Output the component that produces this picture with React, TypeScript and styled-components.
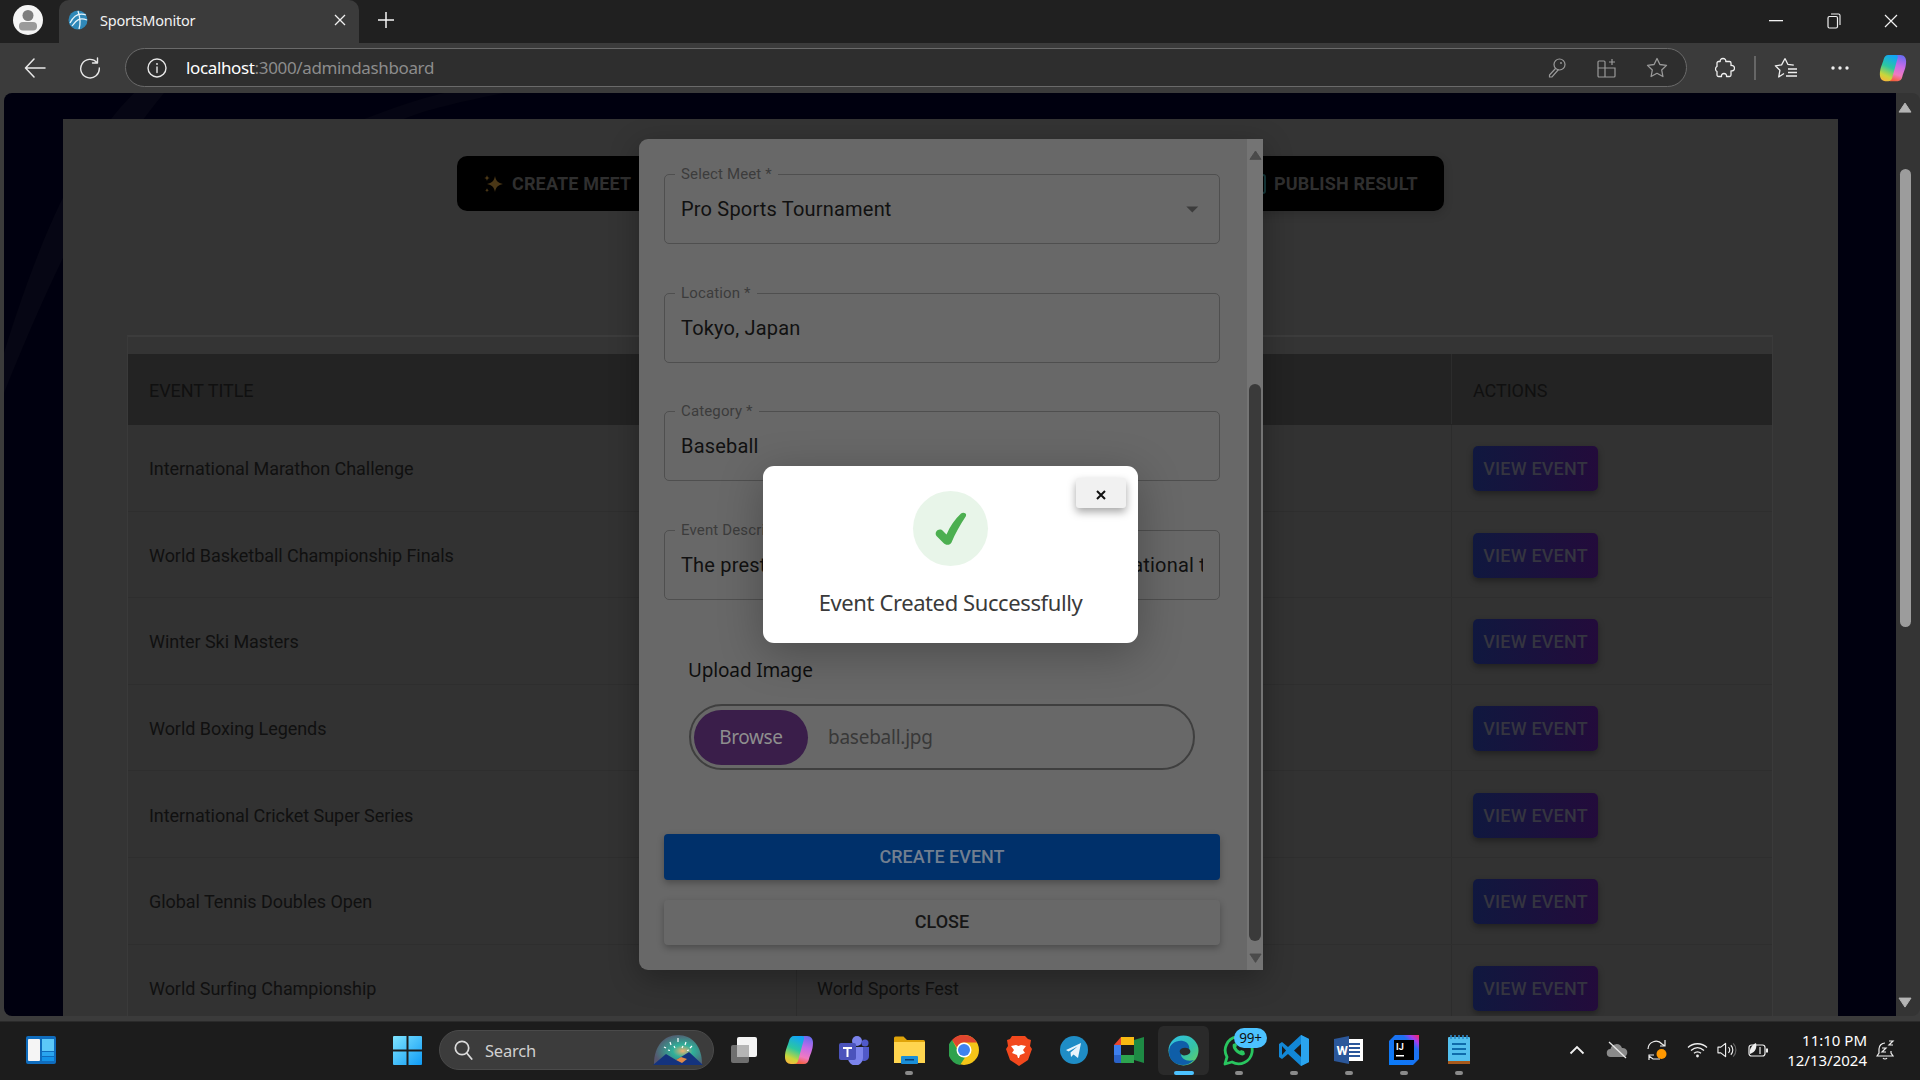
import React from "react";
import styled, { createGlobalStyle } from "styled-components";

const Global = createGlobalStyle`
  html, body { margin: 0; padding: 0; width: 1920px; height: 1080px; overflow: hidden; background: #1c1c1c; }
  * { box-sizing: border-box; }
`;
const UI = `"Noto Sans", "Open Sans", sans-serif`;
const RB = `Roboto, "Liberation Sans", sans-serif`;

const Shell = styled.div`
  width: 1920px; height: 1080px; display: flex; flex-direction: column; background: #3b3b3b; overflow: hidden;
`;
const TabBar = styled.div`
  height: 43px; flex: none; background: #202020; display: flex; align-items: flex-start; position: relative;
`;
const Avatar = styled.div`
  width: 30px; height: 30px; margin: 5px 16px 0 13px; border-radius: 50%; background: #f5f5f5; display: flex; align-items: center; justify-content: center;
`;
const Tab = styled.div`
  width: 300px; height: 43px; background: #3b3b3b; border-radius: 10px 10px 0 0; display: flex; align-items: center; padding: 0 13px 3px 9px; color: #f2f2f2;
`;
const TabTitle = styled.span`
  font: 400 14.5px ${UI}; letter-spacing: -0.25px; margin-left: 12px; flex: 1; white-space: nowrap;
`;
const NewTab = styled.div`
  width: 54px; height: 40px; display: flex; align-items: center; justify-content: center;
`;
const WinControls = styled.div`
  margin-left: auto; display: flex; height: 42px; align-items: center;
`;
const WinBtn = styled.div`
  width: 57.5px; height: 42px; display: flex; align-items: center; justify-content: center;
`;
const Toolbar = styled.div`
  height: 50px; flex: none; background: #3b3b3b; display: flex; align-items: center; padding: 0 0 1px 0;
`;
const NavBtn = styled.div<{ $w: number; $ml?: number }>`
  width: ${(p) => p.$w}px; margin-left: ${(p) => p.$ml ?? 0}px; height: 40px; flex: none; display: flex; align-items: center; justify-content: center;
`;
const Address = styled.div`
  width: 1562px; height: 39px; flex: none; margin-left: 11px; border: 1.5px solid #6a6a6a; border-radius: 20px; background: #2e2e2e; display: flex; align-items: center; padding: 0 4px 0 21px;
`;
const UrlHost = styled.span`
  font: 400 17px ${UI}; color: #fff; letter-spacing: -0.36px; margin-left: 19px;
`;
const UrlPath = styled.span`
  font: 400 17px ${UI}; color: #8c8c8c; letter-spacing: -0.36px; flex: 1;
`;
const AddrIcon = styled.div`
  width: 50px; height: 30px; display: flex; align-items: center; justify-content: center; flex: none;
`;
const Sep = styled.div`
  width: 1.5px; height: 24px; background: #666; flex: none;
`;
const Content = styled.div`
  flex: 1; min-height: 0; display: flex; margin: 0 0 5px 4px;
`;
const Page = styled.div`
  width: 1892px; position: relative; background: #00000f; border-radius: 8px 0 0 8px; padding: 26px 58px 0 59px; overflow: hidden;
`;
const Swoosh = styled.svg`
  position: absolute; inset: 0; width: 100%; height: 100%;
`;
const Panel = styled.div`
  position: relative; height: 100%; background: #343434; padding-top: 37px;
`;
const TopActions = styled.div`
  display: flex; justify-content: center;
`;
const ActionBtn = styled.div<{ $w: number; $pl: number }>`
  width: ${(p) => p.$w}px; padding-left: ${(p) => p.$pl}px; height: 55px; background: #000; display: flex; align-items: center; gap: 8px; font: 700 18px ${RB}; letter-spacing: .15px; color: #2f2f2f; text-transform: uppercase; white-space: nowrap;
  &:first-child { border-radius: 10px 0 0 10px; }
  &:last-child { border-radius: 0 10px 10px 0; box-shadow: 0 3px 10px rgba(0,0,0,.15); }
`;
const Table = styled.div`
  margin: 124px 65px 0 64px; border-top: 2px solid #3c3c3c; padding-top: 17px; border-left: 1px solid #3a3a3a; border-right: 1px solid #3a3a3a;
`;
const Row = styled.div<{ $head?: boolean }>`
  display: grid; grid-template-columns: 669px 655px 1fr; height: ${(p) => (p.$head ? 71 : 86.6)}px; align-items: center; background: ${(p) => (p.$head ? "#232323" : "#323232")}; border-bottom: 1px solid ${(p) => (p.$head ? "#232323" : "#2e2e2e")};
`;
const Cell = styled.div`
  height: 100%; display: flex; align-items: center; padding: 2px 0 0 20px; font: 400 18px ${RB}; letter-spacing: -.05px; color: #101010; border-right: 1px solid #2c2c2c;
  &:first-child { padding-left: 21px; }
  &:last-child { border-right: 0; padding-left: 21px; }
`;
const ViewBtn = styled.div`
  width: 125px; height: 45px; border-radius: 5px; background: linear-gradient(90deg, #10183f, #230b3b); display: flex; align-items: center; justify-content: center; font: 500 18px ${RB}; letter-spacing: .2px; color: #353540; box-shadow: 0 3px 6px rgba(0,0,0,.35);
`;
const Modal = styled.div`
  position: absolute; left: 635px; top: 46px; width: 624px; height: 831px; background: #686868; border-radius: 9px 0 0 9px; display: flex; box-shadow: 0 8px 30px rgba(0,0,0,.3);
`;
const ModalBody = styled.div`
  width: 608px; flex: none; padding: 26px 27px 0 25px; display: flex; flex-direction: column;
`;
const Field = styled.fieldset<{ $mb: number }>`
  margin: 0 0 ${(p) => p.$mb}px; padding: 0 16px; height: 79px; min-width: 0; border: 1px solid #4f4f4f; border-radius: 5px; display: flex; flex-direction: column; flex: none;
`;
const Legend = styled.legend`
  margin-left: -6px; padding: 0 6px; font: 400 15px/18px ${RB}; color: #3c3c3c; letter-spacing: .14px;
`;
const ValueRow = styled.div`
  height: 52px; display: flex; align-items: center; justify-content: space-between; margin-right: -4px;
`;
const Value = styled.div`
  font: 400 20px/52px ${RB}; color: #111; letter-spacing: .19px; white-space: nowrap; overflow: hidden; width: 522px;
`;
const UploadLabel = styled.div`
  margin: 15px 0 19px 24px; font: 400 19px/30px ${UI}; letter-spacing: -.15px; color: #0e0e0e;
`;
const UploadBox = styled.div`
  width: 506px; height: 66px; margin-left: 25px; border: 2px solid #3f3f3f; border-radius: 33px; display: flex; align-items: center; padding-left: 3px; flex: none;
`;
const Browse = styled.div`
  width: 114px; height: 55px; border-radius: 28px; background: #3a1e4a; color: #8e8e8e; font: 400 19px ${UI}; letter-spacing: -.4px; display: flex; align-items: center; justify-content: center;
`;
const FileName = styled.div`
  margin-left: 20px; font: 400 19px ${UI}; letter-spacing: -.25px; color: #383838;
`;
const BlockBtn = styled.div<{ $primary?: boolean }>`
  height: ${(p) => (p.$primary ? 46 : 45)}px; margin-top: ${(p) => (p.$primary ? 64 : 20)}px; padding-bottom: 2px; flex: none; border-radius: 4px; background: ${(p) => (p.$primary ? "#00306a" : "#686868")}; color: ${(p) => (p.$primary ? "#727f90" : "#161616")}; display: flex; align-items: center; justify-content: center; font: 500 18px ${RB}; box-shadow: 0 3px 7px rgba(0,0,0,.28);
`;
const ModalBar = styled.div`
  width: 16px; flex: none; background: #747474; display: flex; flex-direction: column; align-items: center; justify-content: space-between; padding: 11px 0 7px;
`;
const ThumbTrack = styled.div<{ $top: number; $h: number; $c: string; $w: number }>`
  flex: 1; width: 100%; padding-top: ${(p) => p.$top}px; display: flex; flex-direction: column; align-items: center;
  &::after { content: ""; display: block; width: ${(p) => p.$w}px; height: ${(p) => p.$h}px; border-radius: 6px; background: ${(p) => p.$c}; }
`;
const Alert = styled.div`
  position: absolute; left: 759px; top: 373px; width: 375px; height: 177px; background: #fff; border-radius: 11px; display: flex; flex-direction: column; align-items: center; padding-top: 25px; box-shadow: 0 10px 44px rgba(0,0,0,.28);
`;
const AlertClose = styled.div`
  position: absolute; right: 12px; top: 12px; width: 50px; height: 30px; padding-top: 4px; background: #f1f1f1; border-radius: 3px; box-shadow: 0 4px 9px rgba(0,0,0,.35); display: flex; align-items: center; justify-content: center;
`;
const CheckCircle = styled.div`
  width: 75px; height: 75px; border-radius: 50%; background: #e8f5e9; display: flex; align-items: center; justify-content: center;
`;
const AlertText = styled.div`
  margin-top: 21px; font: 400 22px/30px ${UI}; letter-spacing: -.4px; color: #3a3a3a; white-space: nowrap;
`;
const PageBar = styled.div`
  width: 24px; flex: none; background: #343434; border-radius: 0 8px 8px 0; display: flex; flex-direction: column; align-items: center; padding: 9px 6px 8px 0;
`;
const Taskbar = styled.div`
  height: 59px; flex: none; background: #1c1c1c; display: flex; align-items: center; padding-bottom: 2px; position: relative; border-top: 1px solid #2a2a2a;
`;
const Widgets = styled.div`
  margin-left: 26px; width: 30px; height: 28px; flex: none;
`;
const StartCell = styled.div`
  margin-left: 324px; width: 55px; height: 48px; display: flex; align-items: center; justify-content: center; flex: none;
`;
const SearchBox = styled.div`
  margin-left: 4px; width: 275px; height: 40px; border-radius: 20px; background: #3c3c3c; border: 1px solid #4a4a4a; display: flex; align-items: center; padding: 0 7px 0 14px; flex: none; font: 400 16.5px ${UI}; letter-spacing: -.2px; color: #d0d0d0; gap: 12px;
`;
const SearchText = styled.span` flex: 1; `;
const TaskIcons = styled.div`
  margin-left: 2px; display: flex; flex: none;
`;
const TaskCell = styled.div<{ $active?: boolean }>`
  width: 55px; height: 49px; position: relative; display: flex; align-items: center; justify-content: center; border-radius: 7px; border: solid transparent; border-width: 0 2.5px; background: ${(p) => (p.$active ? "#2a2a2a" : "transparent")}; background-clip: padding-box;
`;
const RunDot = styled.span<{ $active?: boolean }>`
  position: absolute; bottom: 0; left: 50%; transform: translateX(-50%); height: 4px; border-radius: 2px; width: ${(p) => (p.$active ? 20 : 8)}px; background: ${(p) => (p.$active ? "#4cc2ff" : "#8a8a8a")};
`;
const Badge = styled.span`
  position: absolute; left: 21px; top: 2px; width: 33px; height: 20px; border-radius: 10px; background: #4cc2ff; color: #111; font: 400 13.5px/20px ${UI}; text-align: center; letter-spacing: -.3px;
`;
const Tray = styled.div`
  margin-left: auto; display: flex; align-items: center; padding-right: 24px;
`;
const TrayIcon = styled.div<{ $w: number }>`
  width: ${(p) => p.$w}px; height: 30px; display: flex; align-items: center; justify-content: center; flex: none;
`;
const Clock = styled.div`
  width: 88px; margin: 0 9px 0 0; text-align: right; font: 400 15px/20px ${UI}; color: #fff; white-space: nowrap;
`;

const stroke = { fill: "none", stroke: "#e8e8e8", strokeWidth: 1.4, strokeLinecap: "round" as const, strokeLinejoin: "round" as const };

const Copilot = ({ s, id }: { s: number; id: string }) => (
  <svg width={s} height={s} viewBox="0 0 32 32">
    <defs>
      <linearGradient id={`${id}a`} x1="0.6" y1="0" x2="0.3" y2="1"><stop offset="0" stopColor="#12a5f5" /><stop offset=".45" stopColor="#2cc7a0" /><stop offset=".8" stopColor="#c9d63a" /><stop offset="1" stopColor="#f5b83c" /></linearGradient>
      <linearGradient id={`${id}b`} x1="0.6" y1="0" x2="0.4" y2="1"><stop offset="0" stopColor="#6a6cf0" /><stop offset=".4" stopColor="#c56be8" /><stop offset=".75" stopColor="#f07ac0" /><stop offset="1" stopColor="#f4603f" /></linearGradient>
    </defs>
    <path d="M21 30h-8c-2 0-2.400-1.400-2-3l6-22c.6-2 2-3 4-3h3c4 0 6 3 6 7 0 7-3 12-4 16-.5 3-2.500 5-5 5z" fill={`url(#${id}b)`} />
    <path d="M11 2h8c2 0 2.400 1.400 2 3l-6 22c-.6 2-2 3-4 3H8c-4 0-6-3-6-7 0-7 3-12 4-16 .5-3 2.500-5 5-5z" fill={`url(#${id}a)`} />
  </svg>
);

const rows = [
  "International Marathon Challenge",
  "World Basketball Championship Finals",
  "Winter Ski Masters",
  "World Boxing Legends",
  "International Cricket Super Series",
  "Global Tennis Doubles Open",
  "World Surfing Championship",
];

const Up = ({ c, s = 14 }: { c: string; s?: number }) => (
  <svg width={s} height={s * 0.8} viewBox="0 0 14 11"><path d="M7 1 L13 10 H1 Z" fill={c} stroke={c} strokeLinejoin="round" /></svg>
);
const Down = ({ c, s = 14 }: { c: string; s?: number }) => (
  <svg width={s} height={s * 0.8} viewBox="0 0 14 11"><path d="M7 10 L13 1 H1 Z" fill={c} stroke={c} strokeLinejoin="round" /></svg>
);

const task: { key: string; node: React.ReactNode; dot?: boolean; active?: boolean; badge?: boolean }[] = [
  { key: "view", node: (
    <svg width="28" height="28" viewBox="0 0 28 28"><rect x="1" y="9" width="18" height="18" rx="2" fill="#6f6f6f" /><rect x="7" y="1" width="20" height="20" rx="2" fill="#f4f4f4" /><rect x="7" y="9" width="12" height="12" fill="#b5b5b5" /></svg>
  ) },
  { key: "copilot", node: <Copilot s={32} id="tb" /> },
  { key: "teams", node: (
    <svg width="32" height="30" viewBox="0 0 32 30"><circle cx="19" cy="6" r="5" fill="#7b83eb" /><circle cx="27" cy="8" r="3.500" fill="#5059c9" /><path d="M22 12h9v9a5 5 0 0 1-9 3z" fill="#5059c9" /><path d="M10 12h15v11a7 7 0 0 1-15 0z" fill="#7b83eb" /><rect x="1" y="8" width="17" height="17" rx="2" fill="#4b53bc" /><path d="M5 12h9v2h-3.500v8h-2v-8H5z" fill="#fff" /></svg>
  ) },
  { key: "folder", dot: true, node: (
    <svg width="32" height="28" viewBox="0 0 32 28"><path d="M1 2a1.500 1.500 0 0 1 1.500-1.500h8L14 4h16.500A1.500 1.500 0 0 1 32 5.500V10H1z" fill="#e0a409" /><path d="M1 6h31v21H1z" fill="#ffd54f" /><rect x="8" y="20" width="17" height="8" rx="1" fill="#1b8fd8" /><rect x="12" y="23" width="9" height="1.500" fill="#0b3f70" /></svg>
  ) },
  { key: "chrome", node: (
    <svg width="30" height="30" viewBox="0 0 30 30"><circle cx="15" cy="15" r="15" fill="#f5c518" /><path d="M15 0a15 15 0 0 1 13 7.500H15a7.500 7.500 0 0 0-7 5L3 5A15 15 0 0 1 15 0z" fill="#e0452f" /><path d="M3 5l6.500 11.500a7 7 0 0 0 6.500 6L11 30A15 15 0 0 1 3 5z" fill="#2fa24e" /><circle cx="15" cy="15" r="7.500" fill="#fff" /><circle cx="15" cy="15" r="6" fill="#3f82f0" /></svg>
  ) },
  { key: "brave", node: (
    <svg width="27" height="31" viewBox="0 0 27 31"><path d="M7 1h13l3 3 3 1-1 6 2 3-4 11-9 6-9-6L1 14l2-3-1-6 3-1z" fill="#f2481d" /><path d="M6 11l5-1 2.500 1 2.500-1 5 1-3 4 2 3-5 2-1 3h-1l-1-3-5-2 2-3z" fill="#fff" /></svg>
  ) },
  { key: "telegram", node: (
    <svg width="28" height="28" viewBox="0 0 28 28"><circle cx="14" cy="14" r="14" fill="#1f8dc6" /><path d="M6 14l15-7-3 15-4.500-3.500-2.500 2.500-.5-4.500 7-6-9 5z" fill="#e9f4fb" /></svg>
  ) },
  { key: "meet", node: (
    <svg width="30" height="26" viewBox="0 0 30 26"><path d="M7 0h13v8H7z" fill="#f9ba12" /><path d="M7 0v8H0z" fill="#e8452e" /><path d="M0 8h7v10H0z" fill="#3d7fee" /><path d="M0 18h7v8H2a2 2 0 0 1-2-2z" fill="#2a62c8" /><path d="M7 18h13v8H7z" fill="#2da44f" /><path d="M20 3v20l10 3V0z" fill="#1e8a44" /><path d="M7 8h13v10H7z" fill="#1c1c1c" /></svg>
  ) },
  { key: "edge", active: true, node: (
    <svg width="31" height="31" viewBox="0 0 31 31">
      <defs><linearGradient id="edg" x1="0" y1="0" x2="1" y2="1"><stop offset="0" stopColor="#2fc1e8" /><stop offset=".6" stopColor="#35c2a6" /><stop offset="1" stopColor="#6bd35b" /></linearGradient></defs>
      <circle cx="15.500" cy="15.500" r="15" fill="url(#edg)" />
      <path d="M1 17C1 8 9 5 15 6c5 1 7 5 6 9-1 3-4 4-8 4 0 5 6 8 13 6-3 3-7 5-11 5C7 30 1 25 1 17z" fill="#0f5ea8" />
      <path d="M12 15c2-3 8-3 10 0 1 2 0 4-3 5l-3 .5c-3-.5-5-3-4-5.500z" fill="#2a2a2a" />
    </svg>
  ) },
  { key: "whats", badge: true, dot: true, node: (
    <svg width="31" height="31" viewBox="0 0 31 31"><path d="M2 29l2-7A13.500 13.500 0 1 1 9 27z" fill="none" stroke="#29c55f" strokeWidth="2.800" strokeLinejoin="round" /><path d="M10 9c-1 2 0 6 4 9s7 3 8 1l-1-3-3-1-1 1c-2-1-3-2-4-4l1-1-1-3z" fill="#29c55f" /></svg>
  ) },
  { key: "code", dot: true, node: (
    <svg width="30" height="31" viewBox="0 0 30 31"><path d="M22 0l8 4v23l-8 4-13-12-6 5-3-2V9l3-2 6 5z" fill="#1287d6" /><path d="M22 0l8 4v23l-8 4z" fill="#2aa4ef" /><path d="M22 9l-7 6.500 7 6.500z" fill="#1c1c1c" /><path d="M3 11v9l4-4.500z" fill="#1c1c1c" /></svg>
  ) },
  { key: "word", dot: true, node: (
    <svg width="29" height="28" viewBox="0 0 29 28"><rect x="8" y="3" width="21" height="22" fill="#fff" /><path d="M15 8h11M15 12h11M15 16h11M15 20h11" stroke="#2b579a" strokeWidth="2" /><path d="M0 3l15-3v28L0 25z" fill="#2b579a" /><text x="2.500" y="19" fontFamily="Roboto, sans-serif" fontWeight="700" fontSize="13" fill="#fff">W</text></svg>
  ) },
  { key: "idea", dot: true, node: (
    <svg width="30" height="30" viewBox="0 0 30 30">
      <defs><linearGradient id="ij" x1="0" y1="1" x2="1" y2="0"><stop offset="0" stopColor="#087cfa" /><stop offset=".72" stopColor="#1e70f0" /><stop offset=".85" stopColor="#a43bf0" /><stop offset="1" stopColor="#fe2857" /></linearGradient></defs>
      <path d="M6 0h24v24l-6 6H0V6z" fill="url(#ij)" /><rect x="5" y="5" width="20" height="20" fill="#000" />
      <text x="7" y="15" fontFamily="Roboto, sans-serif" fontWeight="700" fontSize="9" fill="#fff">IJ</text><rect x="7" y="20" width="8" height="1.500" fill="#fff" />
    </svg>
  ) },
  { key: "notepad", dot: true, node: (
    <svg width="24" height="30" viewBox="0 0 24 30"><rect x="1" y="2" width="22" height="26" rx="1" fill="#53c0ee" /><rect x="1" y="26" width="22" height="3" fill="#a8591b" /><path d="M5 9h14M5 14h14M5 19h14" stroke="#0f6cab" strokeWidth="2.200" /><path d="M4 0v4M8 0v4M12 0v4M16 0v4M20 0v4" stroke="#2e89c9" strokeWidth="1.600" /></svg>
  ) },
];

export default function App() {
  return (
    <Shell>
      <Global />
      <TabBar>
        <Avatar>
          <svg width="20" height="24" viewBox="0 0 20 24"><circle cx="10" cy="7.500" r="5.500" fill="#7d7d7d" /><rect x="1" y="14" width="18" height="8.500" rx="4" fill="#9a9a9a" /></svg>
        </Avatar>
        <Tab>
          <svg width="20" height="20" viewBox="0 0 20 20"><circle cx="10" cy="10" r="9.500" fill="#2f88b8" /><path d="M2 13C6 5 12 3 18 5M4 16c4-6 8-9 15-6M10 1c2 6 3 12 1 18" stroke="#e8f4fa" strokeWidth="1.300" fill="none" /></svg>
          <TabTitle>SportsMonitor</TabTitle>
          <svg width="12" height="12" viewBox="0 0 12 12"><path d="M1 1l10 10M11 1L1 11" stroke="#f0f0f0" strokeWidth="1.300" /></svg>
        </Tab>
        <NewTab>
          <svg width="18" height="18" viewBox="0 0 18 18"><path d="M9 1v16M1 9h16" stroke="#f4f4f4" strokeWidth="1.500" /></svg>
        </NewTab>
        <WinControls>
          <WinBtn><svg width="14" height="2"><rect width="14" height="1.300" fill="#f2f2f2" /></svg></WinBtn>
          <WinBtn><svg width="14" height="16" viewBox="0 0 14 16"><rect x="1" y="3.500" width="9.500" height="11.500" rx="1.500" fill="none" stroke="#f2f2f2" strokeWidth="1.200" /><path d="M4 1h7.500a1.500 1.500 0 0 1 1.500 1.500V12" fill="none" stroke="#f2f2f2" strokeWidth="1.100" /></svg></WinBtn>
          <WinBtn><svg width="14" height="14" viewBox="0 0 14 14"><path d="M1 1l12 12M13 1L1 13" stroke="#f2f2f2" strokeWidth="1.200" /></svg></WinBtn>
        </WinControls>
      </TabBar>
      <Toolbar>
        <NavBtn $w={62} $ml={4}>
          <svg width="22" height="20" viewBox="0 0 22 20"><path d="M10 1L1.500 10l8.500 9M2 10h19" {...stroke} strokeWidth={1.500} /></svg>
        </NavBtn>
        <NavBtn $w={48}>
          <svg width="22" height="22" viewBox="0 0 22 22"><path d="M18 5.500A9.300 9.300 0 1 0 20.300 11M18.500 1v5h-5" {...stroke} strokeWidth={1.400} /></svg>
        </NavBtn>
        <Address>
          <svg width="20" height="20" viewBox="0 0 20 20"><circle cx="10" cy="10" r="9" {...stroke} /><path d="M10 9v5.500" {...stroke} /><circle cx="10" cy="6" r=".9" fill="#e8e8e8" /></svg>
          <UrlHost>localhost</UrlHost>
          <UrlPath>:3000/admindashboard</UrlPath>
          <AddrIcon>
            <svg width="18" height="20" viewBox="0 0 18 20"><circle cx="11.500" cy="6.500" r="5.500" fill="none" stroke="#9a9a9a" strokeWidth="1.200" /><path d="M7.500 10.500L1.500 17v2h2.500l6.500-7.500" fill="none" stroke="#9a9a9a" strokeWidth="1.200" /><circle cx="13" cy="5" r=".9" fill="#9a9a9a" /></svg>
          </AddrIcon>
          <AddrIcon>
            <svg width="20" height="20" viewBox="0 0 20 20"><path d="M1 4a1 1 0 0 1 1-1h5a1 1 0 0 1 1 1v6H1zM1 10h7v9H2a1 1 0 0 1-1-1zM8 10h10v8a1 1 0 0 1-1 1H8zM15 1v6M12 4h6" fill="none" stroke="#9a9a9a" strokeWidth="1.200" /></svg>
          </AddrIcon>
          <AddrIcon>
            <svg width="22" height="22" viewBox="0 0 22 22"><path d="M11 1.500l2.900 6 6.600.9-4.800 4.600 1.200 6.500-5.900-3.200-5.900 3.200L6.300 13 1.500 8.400l6.600-.9z" fill="none" stroke="#9a9a9a" strokeWidth="1.300" strokeLinejoin="round" /></svg>
          </AddrIcon>
        </Address>
        <NavBtn $w={58} $ml={9}>
          <svg width="20" height="22" viewBox="0 0 20 22"><path d="M8 1.500c2 0 3 1.300 2.800 3h3.700a1.500 1.500 0 0 1 1.500 1.500v2.500c2-.3 3.500.8 3.500 2.700s-1.500 3-3.500 2.700V18a1.500 1.500 0 0 1-1.500 1.500h-3c.3-2-1-3-2.500-3s-2.800 1-2.500 3H3.500A1.500 1.500 0 0 1 2 18v-3.500c-1-.5-1.500-1.500-1.500-2.500s.5-2 1.500-2.500V6A1.500 1.500 0 0 1 3.500 4.500h1.700C5 2.800 6 1.500 8 1.500z" fill="none" stroke="#f0f0f0" strokeWidth="1.300" strokeLinejoin="round" /></svg>
        </NavBtn>
        <Sep />
        <NavBtn $w={60}>
          <svg width="24" height="22" viewBox="0 0 24 22"><path d="M11 1.500l2.800 5.800 6 .9M10 16.500l-5.300 3.500 1.200-6.700-4.500-4.500 6.200-.9L11 1.500M14 12h9M14 15.500h9M12 19h11" fill="none" stroke="#f0f0f0" strokeWidth="1.300" strokeLinejoin="round" /></svg>
        </NavBtn>
        <NavBtn $w={48}>
          <svg width="18" height="4" viewBox="0 0 18 4"><circle cx="2" cy="2" r="1.700" fill="#eee" /><circle cx="9" cy="2" r="1.700" fill="#eee" /><circle cx="16" cy="2" r="1.700" fill="#eee" /></svg>
        </NavBtn>
        <NavBtn $w={58}><Copilot s={30} id="tl" /></NavBtn>
      </Toolbar>
      <Content>
        <Page>
          <Swoosh viewBox="0 0 1892 923" preserveAspectRatio="none">
            <path d="M0 260C40 130 80 50 130 0h30C110 60 60 150 0 300z" fill="#060614" />
            <path d="M360 26C390 15 410 7 440 0h60C460 8 420 17 400 26z" fill="#050513" />
          </Swoosh>
          <Panel>
            <TopActions>
              <ActionBtn $w={400} $pl={27}>
                <svg width="20" height="22" viewBox="0 0 20 22"><path d="M11 3c1 5 3 7 8 8-5 1-7 3-8 8-1-5-3-7-8-8 5-1 7-3 8-8z" fill="#4a3716" /><path d="M3 2c.4 2 1 2.600 3 3-2 .4-2.600 1-3 3-.4-2-1-2.600-3-3 2-.4 2.600-1 3-3zM3 15c.3 1.500.8 2 2 2.300-1.200.3-1.700.8-2 2.300-.3-1.500-.8-2-2-2.300 1.200-.3 1.700-.8 2-2.300z" fill="#4a3716" /></svg>
                Create Meet
              </ActionBtn>
              <ActionBtn $w={367} $pl={28}>Create Event</ActionBtn>
              <ActionBtn $w={220} $pl={25}>
                <svg width="17" height="20" viewBox="0 0 17 20"><rect x="1" y="1" width="15" height="18" rx="2" fill="none" stroke="#14383a" strokeWidth="2" /></svg>
                Publish Result
              </ActionBtn>
            </TopActions>
            <Table>
              <Row $head>
                <Cell>EVENT TITLE</Cell>
                <Cell>MEET</Cell>
                <Cell>ACTIONS</Cell>
              </Row>
              {rows.map((r) => (
                <Row key={r}>
                  <Cell>{r}</Cell>
                  <Cell>World Sports Fest</Cell>
                  <Cell><ViewBtn>VIEW EVENT</ViewBtn></Cell>
                </Row>
              ))}
            </Table>
          </Panel>
          <Modal>
            <ModalBody>
              <Field $mb={40}>
                <Legend>Select Meet *</Legend>
                <ValueRow>
                  <Value>Pro Sports Tournament</Value>
                  <svg width="30" height="30" viewBox="0 0 24 24"><path d="M7 10l5 5 5-5z" fill="#3c3c3c" /></svg>
                </ValueRow>
              </Field>
              <Field $mb={39}>
                <Legend>Location *</Legend>
                <ValueRow><Value>Tokyo, Japan</Value></ValueRow>
              </Field>
              <Field $mb={40}>
                <Legend>Category *</Legend>
                <ValueRow><Value>Baseball</Value></ValueRow>
              </Field>
              <Field $mb={40}>
                <Legend>Event Description *</Legend>
                <ValueRow><Value>The prestigious Pro Sports Tournament has international teams</Value></ValueRow>
              </Field>
              <UploadLabel>Upload Image</UploadLabel>
              <UploadBox>
                <Browse>Browse</Browse>
                <FileName>baseball.jpg</FileName>
              </UploadBox>
              <BlockBtn $primary>CREATE EVENT</BlockBtn>
              <BlockBtn>CLOSE</BlockBtn>
            </ModalBody>
            <ModalBar>
              <Up c="#4b4b4b" s={13} />
              <ThumbTrack $top={224} $h={557} $c="#3a3a3a" $w={12} />
              <Down c="#4b4b4b" s={13} />
            </ModalBar>
          </Modal>
          <Alert>
            <AlertClose>
              <svg width="12" height="12" viewBox="0 0 12 12"><path d="M2 2l8 8M10 2l-8 8" stroke="#111" strokeWidth="2" /></svg>
            </AlertClose>
            <CheckCircle>
              <svg width="32" height="34" viewBox="0 0 32 34"><path d="M1 20C3 17 6 17 8 19L11.500 22.500C15 14 20 7 26 1.500C28 0 32 1 31 4C25 13 20 22 16.500 30.500C15 33.500 10.500 33.500 8.500 31L1.500 24C.5 23 .5 21 1 20Z" fill="#4caf50" /></svg>
            </CheckCircle>
            <AlertText>Event Created Successfully</AlertText>
          </Alert>
        </Page>
        <PageBar>
          <Up c="#b4b4b4" s={14} />
          <ThumbTrack $top={56} $h={458} $c="#9c9c9c" $w={11} />
          <Down c="#b4b4b4" s={14} />
        </PageBar>
      </Content>
      <Taskbar>
        <Widgets>
          <svg width="30" height="28" viewBox="0 0 30 28"><rect width="30" height="28" rx="2" fill="#0f6cbd" /><rect x="2" y="3" width="12" height="22" rx="1" fill="#f5f5f5" /><rect x="16" y="3" width="12" height="12" fill="#5cc8f8" /><rect x="16" y="16" width="12" height="4" fill="#2aa5ef" /><rect x="16" y="21" width="12" height="4" fill="#1493e8" /></svg>
        </Widgets>
        <StartCell>
          <svg width="29" height="29" viewBox="0 0 29 29">
            <defs><linearGradient id="win" x1="0" y1="0" x2="1" y2="1"><stop offset="0" stopColor="#7fe4ff" /><stop offset="1" stopColor="#0f9bf5" /></linearGradient></defs>
            <path d="M0 1a1 1 0 0 1 1-1h12.500v13.500H0zM15.500 0H28a1 1 0 0 1 1 1v12.500H15.500zM0 15.500h13.500V29H1a1 1 0 0 1-1-1zM15.500 15.500H29V28a1 1 0 0 1-1 1H15.500z" fill="url(#win)" />
          </svg>
        </StartCell>
        <SearchBox>
          <svg width="19" height="20" viewBox="0 0 19 20"><circle cx="8" cy="8" r="6.700" fill="none" stroke="#dcdcdc" strokeWidth="1.700" /><path d="M12.700 13l5 6" stroke="#dcdcdc" strokeWidth="1.800" strokeLinecap="round" /></svg>
          <SearchText>Search</SearchText>
          <svg width="56" height="32" viewBox="0 0 56 32">
            <defs><radialGradient id="sky" cx=".6" cy=".55" r=".6"><stop offset="0" stopColor="#f0b070" /><stop offset=".35" stopColor="#2fb09a" /><stop offset="1" stopColor="#55566e" /></radialGradient></defs>
            <path d="M4 30C4 12 14 1 28 1s24 11 24 29z" fill="url(#sky)" />
            <path d="M3 31l13-11 10 6 5-3 8-5 14 13z" fill="#14337e" />
            <path d="M26 26l5-3 6 2-5 4z" fill="#e08a4a" />
            <path d="M20 8l1 3M28 4v4M36 8l-1 3M14 13l2 1M42 12l-2 2M24 12l1 2M33 12l-1 2M18 16l2 .5M39 16l-2 .5" stroke="#fff" strokeWidth="1.200" />
          </svg>
        </SearchBox>
        <TaskIcons>
          {task.map((t) => (
            <TaskCell key={t.key} $active={t.active}>
              {t.node}
              {t.badge && <Badge>99+</Badge>}
              {(t.dot || t.active) && <RunDot $active={t.active} />}
            </TaskCell>
          ))}
        </TaskIcons>
        <Tray>
          <TrayIcon $w={40}>
            <svg width="16" height="10" viewBox="0 0 16 10"><path d="M1.500 8.500L8 2l6.500 6.500" fill="none" stroke="#f0f0f0" strokeWidth="1.800" /></svg>
          </TrayIcon>
          <TrayIcon $w={40}>
            <svg width="22" height="18" viewBox="0 0 22 18"><path d="M5 16a4 4 0 0 1-.5-8 6 6 0 0 1 11.500-1 4.500 4.500 0 0 1 1.500 9z" fill="#8a8a8a" /><path d="M3 1l17 16" stroke="#e8e8e8" strokeWidth="1.300" /></svg>
          </TrayIcon>
          <TrayIcon $w={40}>
            <svg width="22" height="22" viewBox="0 0 22 22"><path d="M2 10a8 8 0 0 1 14-5l3 2M19 1v6h-5M14 20H7l-4-3M3 21v-5h5" fill="none" stroke="#eee" strokeWidth="1.200" /><circle cx="15.500" cy="15" r="5" fill="#ff9800" /></svg>
          </TrayIcon>
          <TrayIcon $w={40}>
            <svg width="21" height="16" viewBox="0 0 21 16"><path d="M1 5.500c5-5 14-5 19 0M4 8.500c4-3.500 9-3.500 13 0M7 11.300c2-1.800 5-1.800 7 0" fill="none" stroke="#eee" strokeWidth="1.300" /><circle cx="10.500" cy="14" r="1.400" fill="#eee" /></svg>
          </TrayIcon>
          <TrayIcon $w={20}>
            <svg width="21" height="18" viewBox="0 0 21 18"><path d="M1 6v6h3l5 4V2L4 6z" fill="none" stroke="#eee" strokeWidth="1.200" strokeLinejoin="round" /><path d="M12 6a4 4 0 0 1 0 6M14.500 4a7 7 0 0 1 0 10" fill="none" stroke="#eee" strokeWidth="1.200" /><path d="M17 2a10 10 0 0 1 0 14" fill="none" stroke="#666" strokeWidth="1.200" /></svg>
          </TrayIcon>
          <TrayIcon $w={42}>
            <svg width="21" height="16" viewBox="0 0 21 16"><rect x="1" y="3" width="16" height="11" rx="2.500" fill="none" stroke="#eee" strokeWidth="1.200" /><rect x="18" y="6.500" width="2" height="4" fill="#eee" /><path d="M2 12C1 7 4 3 8 1c1 4 0 9-6 11z" fill="#eee" /><path d="M12 5v7" stroke="#eee" strokeWidth="1.200" /></svg>
          </TrayIcon>
          <Clock>11:10 PM<br />12/13/2024</Clock>
          <TrayIcon $w={20}>
            <svg width="20" height="20" viewBox="0 0 20 20"><path d="M9 3a6 6 0 0 0-6 6v4l-2 3h16l-2-3v-2M7 18a2.500 2.500 0 0 0 4 0" fill="none" stroke="#eee" strokeWidth="1.200" /><path d="M6 8h4l-4 4h4M13 1h4l-4 4h4" fill="none" stroke="#eee" strokeWidth="1.200" /></svg>
          </TrayIcon>
        </Tray>
      </Taskbar>
    </Shell>
  );
}
